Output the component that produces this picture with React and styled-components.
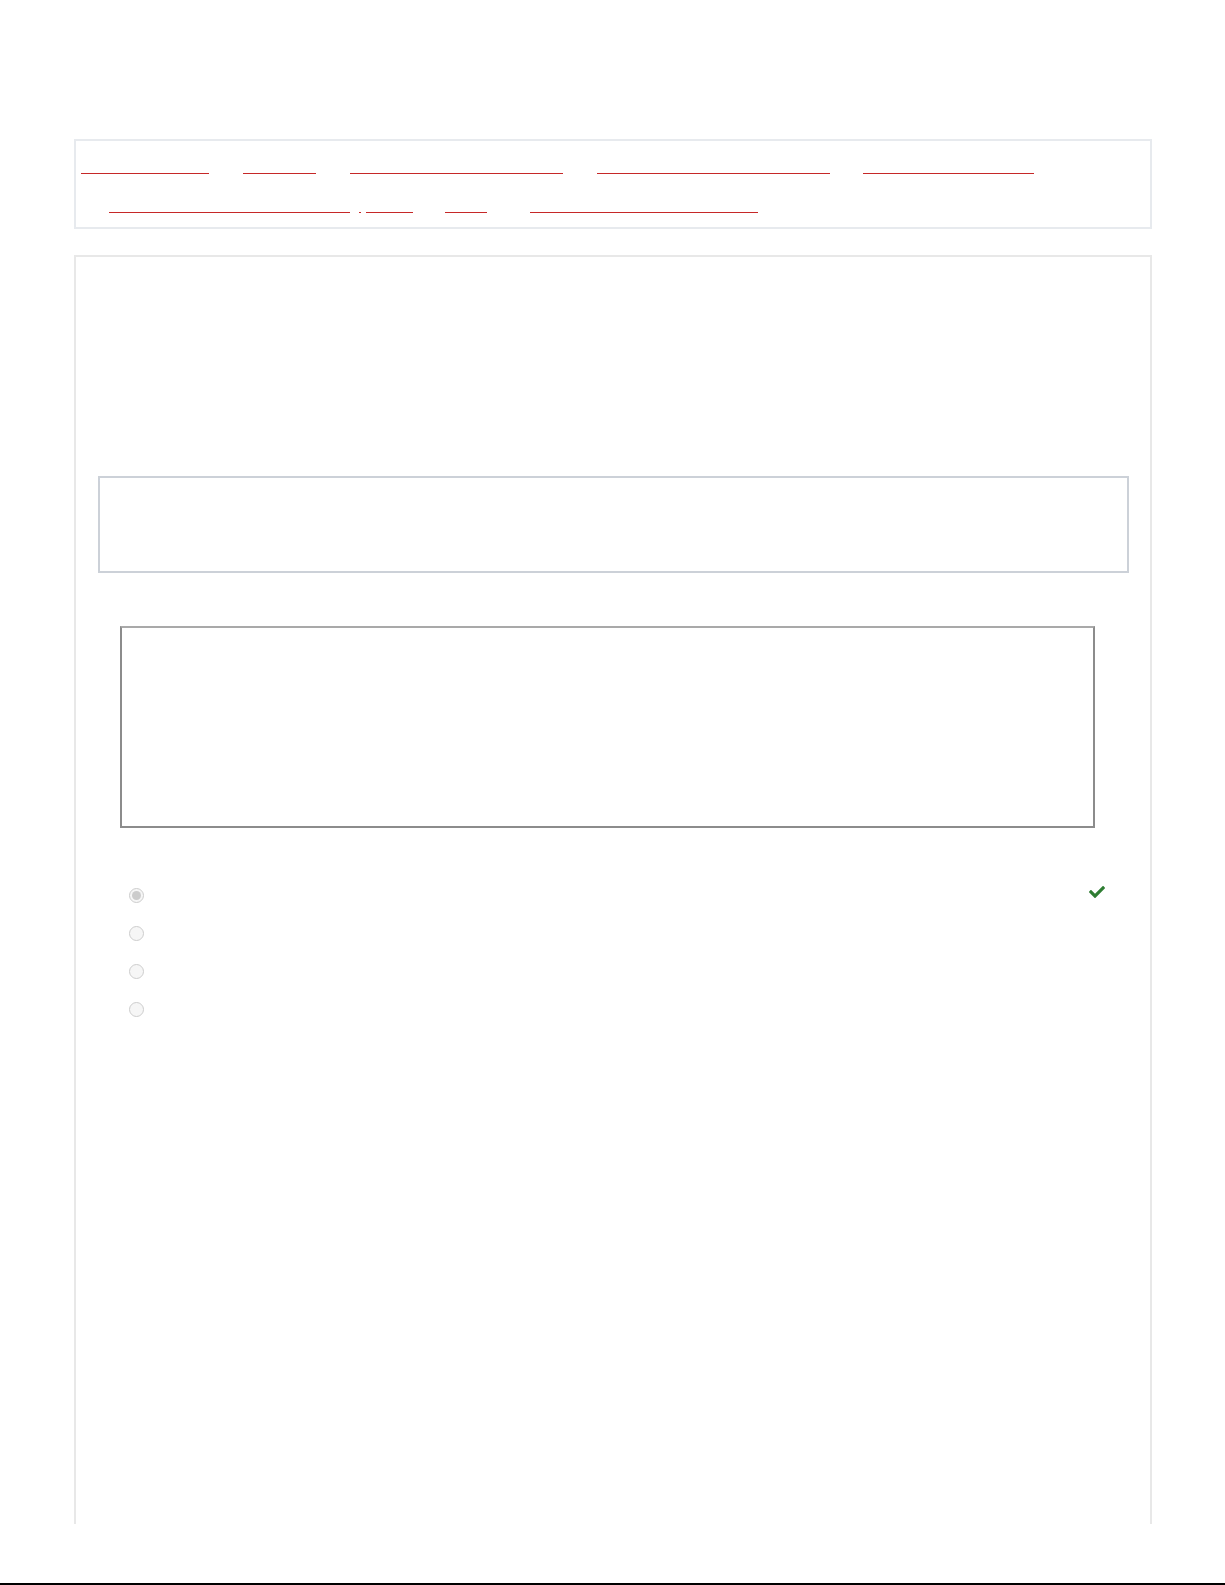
import React from 'react';
import styled, { createGlobalStyle } from 'styled-components';
import { FaCheck } from 'react-icons/fa';

const GlobalStyle = createGlobalStyle`
  html, body {
    margin: 0;
    padding: 0;
    background: #fff;
    font-family: "Liberation Sans", Arial, sans-serif;
  }
`;

const Page = styled.div`
  padding: 139px 0 0 74px;
  width: 1078px;
`;

const NavBox = styled.nav`
  box-sizing: border-box;
  height: 90px;
  border: 2px solid #e7eaee;
  padding-top: 12px;
  display: flex;
  flex-direction: column;
  gap: 18px;
`;

const NavRow = styled.div`
  display: flex;
  align-items: flex-start;
`;

const NavLink = styled.a`
  display: inline-block;
  box-sizing: content-box;
  height: 20px;
  width: ${p => p.$w}px;
  margin-left: ${p => p.$ml}px;
  border-bottom: 1px solid #c62828;
  color: #fff;
  font-size: 14px;
  line-height: 20px;
  text-decoration: none;
  white-space: nowrap;
  overflow: hidden;
`;

const Panel = styled.main`
  box-sizing: border-box;
  margin-top: 26px;
  height: 1269px;
  border: 2px solid #e8e8e8;
  border-bottom: none;
  display: flex;
  flex-direction: column;
  align-items: flex-start;
`;

const Question = styled.div`
  box-sizing: border-box;
  margin: 219px 0 0 22px;
  width: 1031px;
  height: 97px;
  border: 2px solid #ccd1d8;
  color: #fff;
`;

const CodeBox = styled.pre`
  box-sizing: border-box;
  margin: 53px 0 0 44px;
  width: 975px;
  height: 202px;
  border: 2px solid #8c8c8c;
  border-top-color: #a9a9a9;
  color: #fff;
  font-family: "Liberation Mono", monospace;
`;

const Options = styled.ul`
  list-style: none;
  margin: 48px 0 0 0;
  padding: 0;
  width: 100%;
  display: flex;
  flex-direction: column;
`;

const Option = styled.li`
  height: 38px;
  display: flex;
  align-items: center;
  padding-left: 53px;
  color: #fff;
  font-size: 15px;
`;

const Radio = styled.span`
  box-sizing: border-box;
  width: 15px;
  height: 15px;
  border-radius: 50%;
  border: 1px solid #cdcdcd;
  background: #f6f6f6;
  display: flex;
  align-items: center;
  justify-content: center;
  flex: none;
  &::after {
    content: '';
    width: 9px;
    height: 9px;
    border-radius: 50%;
    background: ${p => (p.$checked ? '#cccccc' : 'transparent')};
  }
`;

const OptionText = styled.span`
  margin-left: 12px;
  flex: 1;
`;

const Correct = styled.span`
  align-self: flex-start;
  margin: 8px 45px 0 0;
  color: #2e7d32;
  display: flex;
`;

const Footer = styled.footer`
  margin-top: 59px;
  height: 60px;
  background: #000;
`;

const navRows = [
  [
    { ml: 5, w: 128, label: 'Python Tutorial' },
    { ml: 34, w: 73, label: 'Quiz' },
    { ml: 34, w: 213, label: 'Python Basics Quiz' },
    { ml: 34, w: 233, label: 'Python Functions Quiz' },
    { ml: 33, w: 171, label: 'Python Loops' },
  ],
  [
    { ml: 33, w: 241, label: 'Python Data Structures Quiz' },
    { ml: 9, w: 2, label: '\u00a0' },
    { ml: 5, w: 47, label: 'OOP' },
    { ml: 32, w: 42, label: 'File' },
    { ml: 43, w: 228, label: 'Python Exceptions Quiz' },
  ],
];

const options = [
  { text: 'Option A', checked: true, correct: true },
  { text: 'Option B' },
  { text: 'Option C' },
  { text: 'Option D' },
];

export default function App() {
  return (
    <>
      <GlobalStyle />
      <Page>
        <NavBox>
          {navRows.map((row, r) => (
            <NavRow key={r}>
              {row.map((l, i) => (
                <NavLink key={i} href="#" $ml={l.ml} $w={l.w}>
                  {l.label}
                </NavLink>
              ))}
            </NavRow>
          ))}
        </NavBox>
        <Panel>
          <Question>What is the output of the following code?</Question>
          <CodeBox>print("Hello")</CodeBox>
          <Options>
            {options.map((o, i) => (
              <Option key={i}>
                <Radio $checked={o.checked} />
                <OptionText>{o.text}</OptionText>
                {o.correct && (
                  <Correct>
                    <FaCheck size={16} />
                  </Correct>
                )}
              </Option>
            ))}
          </Options>
        </Panel>
      </Page>
      <Footer />
    </>
  );
}
